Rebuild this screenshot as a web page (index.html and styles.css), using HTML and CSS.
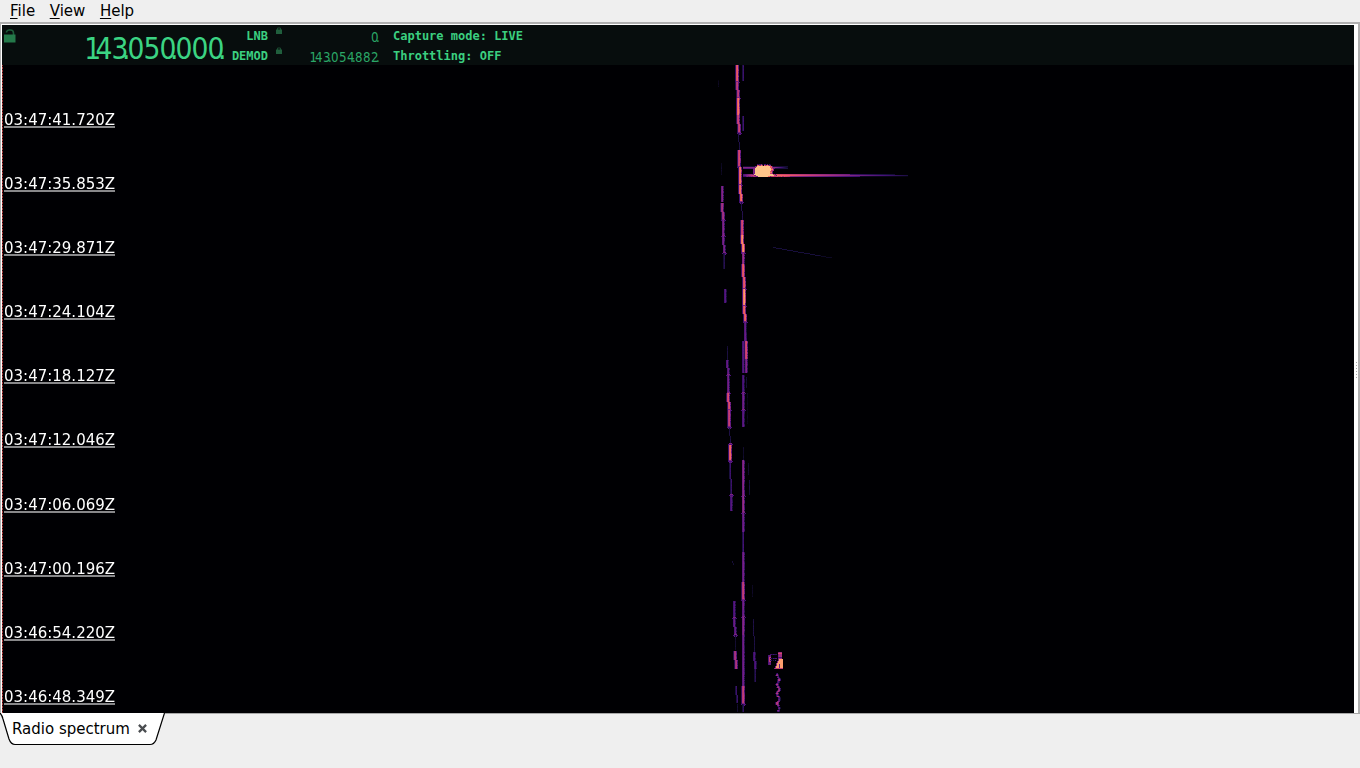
FILE: index.html
```html
<!DOCTYPE html>
<html lang="en">
<head>
	<meta charset="UTF-8">
	<title>Radio spectrum</title>
	<link rel="stylesheet" href="styles.css">
</head>
<body>
	<nav class="menubar">
		<span><u>F</u>ile</span>
		<span><u>V</u>iew</span>
		<span><u>H</u>elp</span>
	</nav>

	<div class="frame">
		<main class="spectrum">
			<header class="lcd">
				<svg class="lock-big" width="12" height="14" viewBox="0 0 12 14">
					<path d="M2.5 3.5V3Q3 1 5 1H6.5Q9.5 1 9.5 4V6" fill="none" stroke="#1e5c3a" stroke-width="1.6"/>
					<rect x="0" y="5.5" width="11.5" height="8" fill="#24794a"/>
				</svg>
				<svg class="freq" width="140" height="40">
					<g transform="scale(.86 1)"></g>
				</svg>
				<div class="labels">
					<span>LNB</span>
					<span>DEMOD</span>
				</div>
				<div class="locks">
					<svg width="6" height="7" viewBox="0 0 6 7"><path d="M1.5 3V1H4.5V3" fill="none" stroke="#1a4a30"/><rect y="2.5" width="6" height="4.5" fill="#205f3d"/></svg>
					<svg width="6" height="7" viewBox="0 0 6 7"><path d="M1.5 3V1H4.5V3" fill="none" stroke="#1a4a30"/><rect y="2.5" width="6" height="4.5" fill="#205f3d"/></svg>
				</div>
				<svg class="small-freq" width="80" height="40">
					<g transform="scale(.82 1)"></g>
				</svg>
				<div class="status">
					<span>Capture mode: LIVE</span>
					<span>Throttling: OFF</span>
				</div>
			</header>
			<section class="waterfall">
				<canvas id="fall" width="1352" height="648"></canvas>
				<div class="times">
					<span>03:47:41.720Z</span>
					<span>03:47:35.853Z</span>
					<span>03:47:29.871Z</span>
					<span>03:47:24.104Z</span>
					<span>03:47:18.127Z</span>
					<span>03:47:12.046Z</span>
					<span>03:47:06.069Z</span>
					<span>03:47:00.196Z</span>
					<span>03:46:54.220Z</span>
					<span>03:46:48.349Z</span>
				</div>
			</section>
		</main>
		<div class="handle"><i></i><i></i><i></i><i></i><i></i><i></i></div>
	</div>

	<footer class="tabs">
		<div class="tab">
			<svg class="tab-shape" width="166" height="33"><path d="M0 0Q2 2 3 6L9 26Q11 31.5 15 31.5H150Q154 31.5 156 27L164.5 0" fill="#fff" stroke="#000" stroke-width="1.2"/></svg>
			<span>Radio spectrum</span>
			<svg class="close" width="9" height="9" viewBox="0 0 8 8"><path d="M.8.8L7.2 7.2M7.2.8L.8 7.2" stroke="#4a4d50" stroke-width="2"/></svg>
		</div>
	</footer>
	<script src="spectrum.js"></script>
</body>
</html>
```
FILE: styles.css
```css
body {
	margin: 0;
	width: 1360px;
	height: 768px;
	overflow: hidden;
	display: flex;
	flex-direction: column;
	background: #efefef;
	font-family: "DejaVu Sans", sans-serif;
	font-size: 15px;
	color: #000;
}

.menubar {
	display: flex;
	gap: 14.6px;
	height: 22px;
	padding-left: 10px;
	line-height: 22px;
}

.menubar u {
	text-underline-offset: 2px;
	text-decoration-thickness: 1px;
}

/* window frame around the waterfall */
.frame {
	display: flex;
	box-sizing: border-box;
	height: 691px;
	border-top: 2px solid #b0b0b0;
	border-left: 1px solid #b0b0b0;
	border-right: 2px solid #b0b0b0;
	background: #fff;
	padding: 1px 0 0 1px;
}

.spectrum {
	width: 1352px;
	height: 688px;
	background: #000003;
}

.lcd {
	display: flex;
	height: 40px;
	background: #070d0d;
	color: #3bcf80;
	font: bold 12px/20px "DejaVu Sans Mono", monospace;
}

.lock-big {
	margin: 4px 0 0 2px;
}

.freq {
	margin-left: 65px;
	font: 31px "DejaVu Sans", sans-serif;
	fill: #3bd483;
	overflow: visible;
}

.labels {
	display: flex;
	flex-direction: column;
	width: 47px;
	text-align: right;
	padding-top: 1px;
}

.locks {
	display: flex;
	flex-direction: column;
	gap: 13px;
	padding: 2px 0 0 8px;
}

.small-freq {
	margin-left: 25px;
	font: 14.5px "DejaVu Sans", sans-serif;
	fill: #2ba767;
	overflow: visible;
}

.status {
	display: flex;
	flex-direction: column;
	padding: 1px 0 0 6px;
}

.waterfall {
	position: relative;
	height: 648px;
	background: #000003;
}

.waterfall canvas {
	display: block;
}

/* time marks lie over the waterfall */
.times {
	position: absolute;
	top: 45px;
	left: 2px;
	display: flex;
	flex-direction: column;
	gap: 46.1px;
	color: #fff;
}

.times span {
	height: 16px;
	line-height: 20px;
	border-bottom: 2px solid #88888a;
}

.handle {
	display: flex;
	flex-direction: column;
	gap: 2px;
	padding: 337px 0 0 2px;
}

.handle i {
	width: 1px;
	height: 1px;
	background: #aaa;
}

.tabs {
	height: 54px;
	border-top: 1px solid #a8a8a8;
}

.tab {
	position: relative;
	display: flex;
	align-items: center;
	gap: 8px;
	height: 29px;
	padding-left: 12px;
}

.tab span,
.tab .close {
	position: relative;
}

.tab-shape {
	position: absolute;
	left: 0;
	top: -1px;
}
```
FILE: spectrum.js
```js
// frequency readouts: one x position per character, dots tuck into the digit
function readout(sel, str, x, y, pitch, scale, dot) {
	var xs = [];
	for (var i = 0; i < str.length; i++) {
		if (str[i] == ".") {
			xs.push((x - dot) / scale);
		} else {
			// the 1 sits at the right of its cell
			xs.push((str[i] == "1" ? x + pitch * .3 : x) / scale);
			x += pitch;
		}
	}
	var t = document.createElementNS("http://www.w3.org/2000/svg", "text");
	t.setAttribute("x", xs.join(" "));
	t.setAttribute("y", y);
	t.textContent = str;
	document.querySelector(sel).appendChild(t);
}
readout(".freq g", "143.050.000.", -1.5, 34, 16, .86, 5.5);
readout(".small-freq g", "0.", 64, 17, 8, .82, 3);
readout(".small-freq g", "143.054.882.", 0, 37, 8, .82, 3);

var ctx = document.getElementById("fall").getContext("2d");
ctx.translate(-2, -65);

var seed = 7;
function rnd() {
	seed = (seed * 16807) % 2147483647;
	return seed / 2147483647;
}

// colour map, from noise floor to peak
var map = [[0, 0, 4], [24, 15, 62], [69, 16, 119], [114, 31, 129], [159, 47, 127], [205, 64, 113], [241, 96, 93], [253, 149, 103], [254, 201, 141]];
function color(v) {
	v = Math.max(0, Math.min(.999, v)) * 8;
	var i = Math.floor(v), f = v - i;
	var c = map[i].map(function (a, k) {
		return Math.round(a + (map[i + 1][k] - a) * f);
	});
	return "rgb(" + c + ")";
}
function dot(x, y, v, w) {
	ctx.fillStyle = color(v);
	ctx.fillRect(x, y, w || 1, 1);
}

// x, top, x, bottom, level, knot at the end
var tracks = [
	[743, 65, 743, 81, .22], [743, 116, 743, 131, .23],
	[737, 65, 737, 82, .72, 1], [737, 82, 738, 98, .58, 1], [738, 98, 738, 115, .8], [738, 115, 739, 133, .62, 1],
	[738, 133, 739, 150, .14], [739, 150, 739, 167, .65, 1], [740, 167, 740, 185, .8, 1], [740, 185, 741, 202, .78, 1],
	[741, 202, 742, 220, .15], [742, 220, 742, 235, .65], [742, 235, 743, 253, .86, 1], [743, 253, 743, 264, .5],
	[743, 264, 744, 289, .72, 1], [744, 289, 744, 306, .88, 1], [744, 306, 745, 322, .75, 1], [745, 322, 745, 341, .35],
	[743, 341, 743, 373, .3], [746, 341, 746, 359, .65], [746, 359, 746, 373, .42], [746, 377, 746, 388, .1],
	[743, 375, 743, 393, .28, 1], [743, 393, 743, 410, .38, 1], [743, 410, 743, 427, .33], [743, 447, 743, 460, .09],
	[743, 460, 743, 496, .45, 1], [743, 496, 743, 513, .49, 1], [743, 513, 743, 532, .38], [743, 532, 743, 552, .24],
	[743, 552, 743, 582, .39], [743, 582, 743, 600, .6, 1], [743, 600, 743, 617, .38, 1], [743, 617, 743, 635, .45],
	[743, 635, 743, 686, .38], [743, 686, 743, 704, .6, 1], [743, 704, 743, 712, .18],
	[721, 163, 721, 175, .07], [722, 186, 722, 202, .43], [722, 203, 723, 220, .52, 1], [723, 220, 723, 236, .42, 1],
	[723, 236, 724, 253, .4, 1], [724, 253, 724, 269, .17], [725, 289, 725, 303, .3], [727, 346, 727, 360, .12],
	[727, 360, 728, 375, .35, 1], [728, 375, 728, 393, .38, 1], [728, 393, 729, 410, .67, 1], [729, 410, 729, 427, .6, 1],
	[729, 428, 730, 444, .13, 1], [730, 445, 730, 461, .76, 1], [730, 463, 731, 495, .22, 1], [731, 497, 731, 511, .3],
	[732, 561, 733, 565, .1], [734, 601, 734, 618, .3, 1], [734, 618, 735, 635, .35, 1], [735, 635, 735, 650, .1],
	[735, 651, 736, 669, .53], [736, 686, 737, 703, .22], [737, 704, 737, 712, .09],
	[752, 585, 752, 597, .06], [753, 619, 754, 652, .14], [754, 652, 755, 669, .28], [755, 669, 755, 682, .17],
	[747, 393, 747, 424, .05], [748, 463, 748, 475, .09], [749, 480, 749, 495, .12], [718, 80, 718, 87, .05],
	[778, 673, 778, 712, .3]
];
tracks.forEach(function (t) {
	for (var y = t[1]; y < t[3]; y++) {
		var x = Math.round(t[0] + (t[2] - t[0]) * (y - t[1]) / (t[3] - t[1]));
		var v = t[4];
		if (t[0] == 778) {
			x += Math.round(Math.sin(y * .65));
			v = .2 + rnd() * .4;
		}
		if (v > .5) {
			dot(x - 2, y, v * .3);
			dot(x - 1, y, v * .92);
			dot(x + 1, y, v * (.35 + rnd() * .35));
		} else if (v > .25) {
			dot(x - 1, y, v * .8);
			dot(x + 1, y, v * (.25 + rnd() * .4));
		} else if (v > .15) {
			dot(x - 1, y, v * .6);
		}
		dot(x, y, v + (rnd() - .5) * .04);
	}
	if (t[5]) {
		dot(t[2] - 2, t[3], .26, 5);
		dot(t[2] - 1, t[3] - 1, .4, 3);
		dot(t[2] - 1, t[3] + 1, .32, 3);
	}
});

// meteor echo with its fading tail
for (var x = 743; x < 908; x++) {
	var v = x < 758 ? .3 + (x - 743) * .035 : .88 - (x - 758) * .005;
	dot(x, 175, v);
	dot(x, 174, x < 895 ? v * (x < 850 ? .85 : .5) : 0);
	dot(x, 176, v * (x < 790 ? .65 + rnd() * .3 : x < 860 ? .6 : .2));
	if (x < 788) {
		dot(x, 167, x < 775 ? .42 : .42 - (x - 775) * .03);
		dot(x, 168, x < 775 ? .3 : .13);
		dot(x, 166, .1);
	}
}
var blob = [[757, 770], [756, 770], [755, 771], [755, 771], [755, 771], [755, 770], [755, 770], [755, 770], [754, 773], [756, 774], [758, 768]];
blob.forEach(function (b, i) {
	dot(b[0] - 2, 166 + i, .4, 2);
	dot(b[0], 166 + i, .99, b[1] - b[0]);
	dot(b[1], 166 + i, .55 + rnd() * .35, 2);
	dot(b[1] + 2, 166 + i, .3 + rnd() * .2);
});
for (x = 757; x < 771; x++) {
	if (x != 763) {
		dot(x, 165, .35 + rnd() * .5);
		dot(x, 164, rnd() * .45);
	}
}

// faint drifting echo
for (x = 773; x < 832; x++) {
	dot(x, Math.round(247 + (x - 773) * .18), x < 820 ? .12 : .07);
}

// small echo near the bottom
for (var y = 655; y < 665; y++) {
	dot(768, y, .28);
	dot(769, y, y > 656 && y < 662 ? .6 : .35, 2);
}
for (x = 770; x < 777; x++) {
	dot(x, 654, .13 + rnd() * .15);
	dot(x, 660, rnd() * .35);
	dot(x, 658, rnd() * .3);
}
for (y = 652; y < 669; y++) {
	var l = y < 659 ? 779 : Math.round(779 - (y - 659) * .4);
	dot(l - 1, y, .4);
	dot(l, y, y < 659 ? .5 : .9, y < 659 ? 3 : 783 - l);
	if (y > 663) dot(779, y, .35);
}
dot(778, 653, .65, 4);
dot(778, 657, .25, 4);
dot(775, 668, .6, 8);

// red edge mark
for (y = 65; y < 713; y++) {
	ctx.fillStyle = y % 3 ? "#a83a3a" : "#300a0c";
	ctx.fillRect(2, y, 1, 1);
}
```
